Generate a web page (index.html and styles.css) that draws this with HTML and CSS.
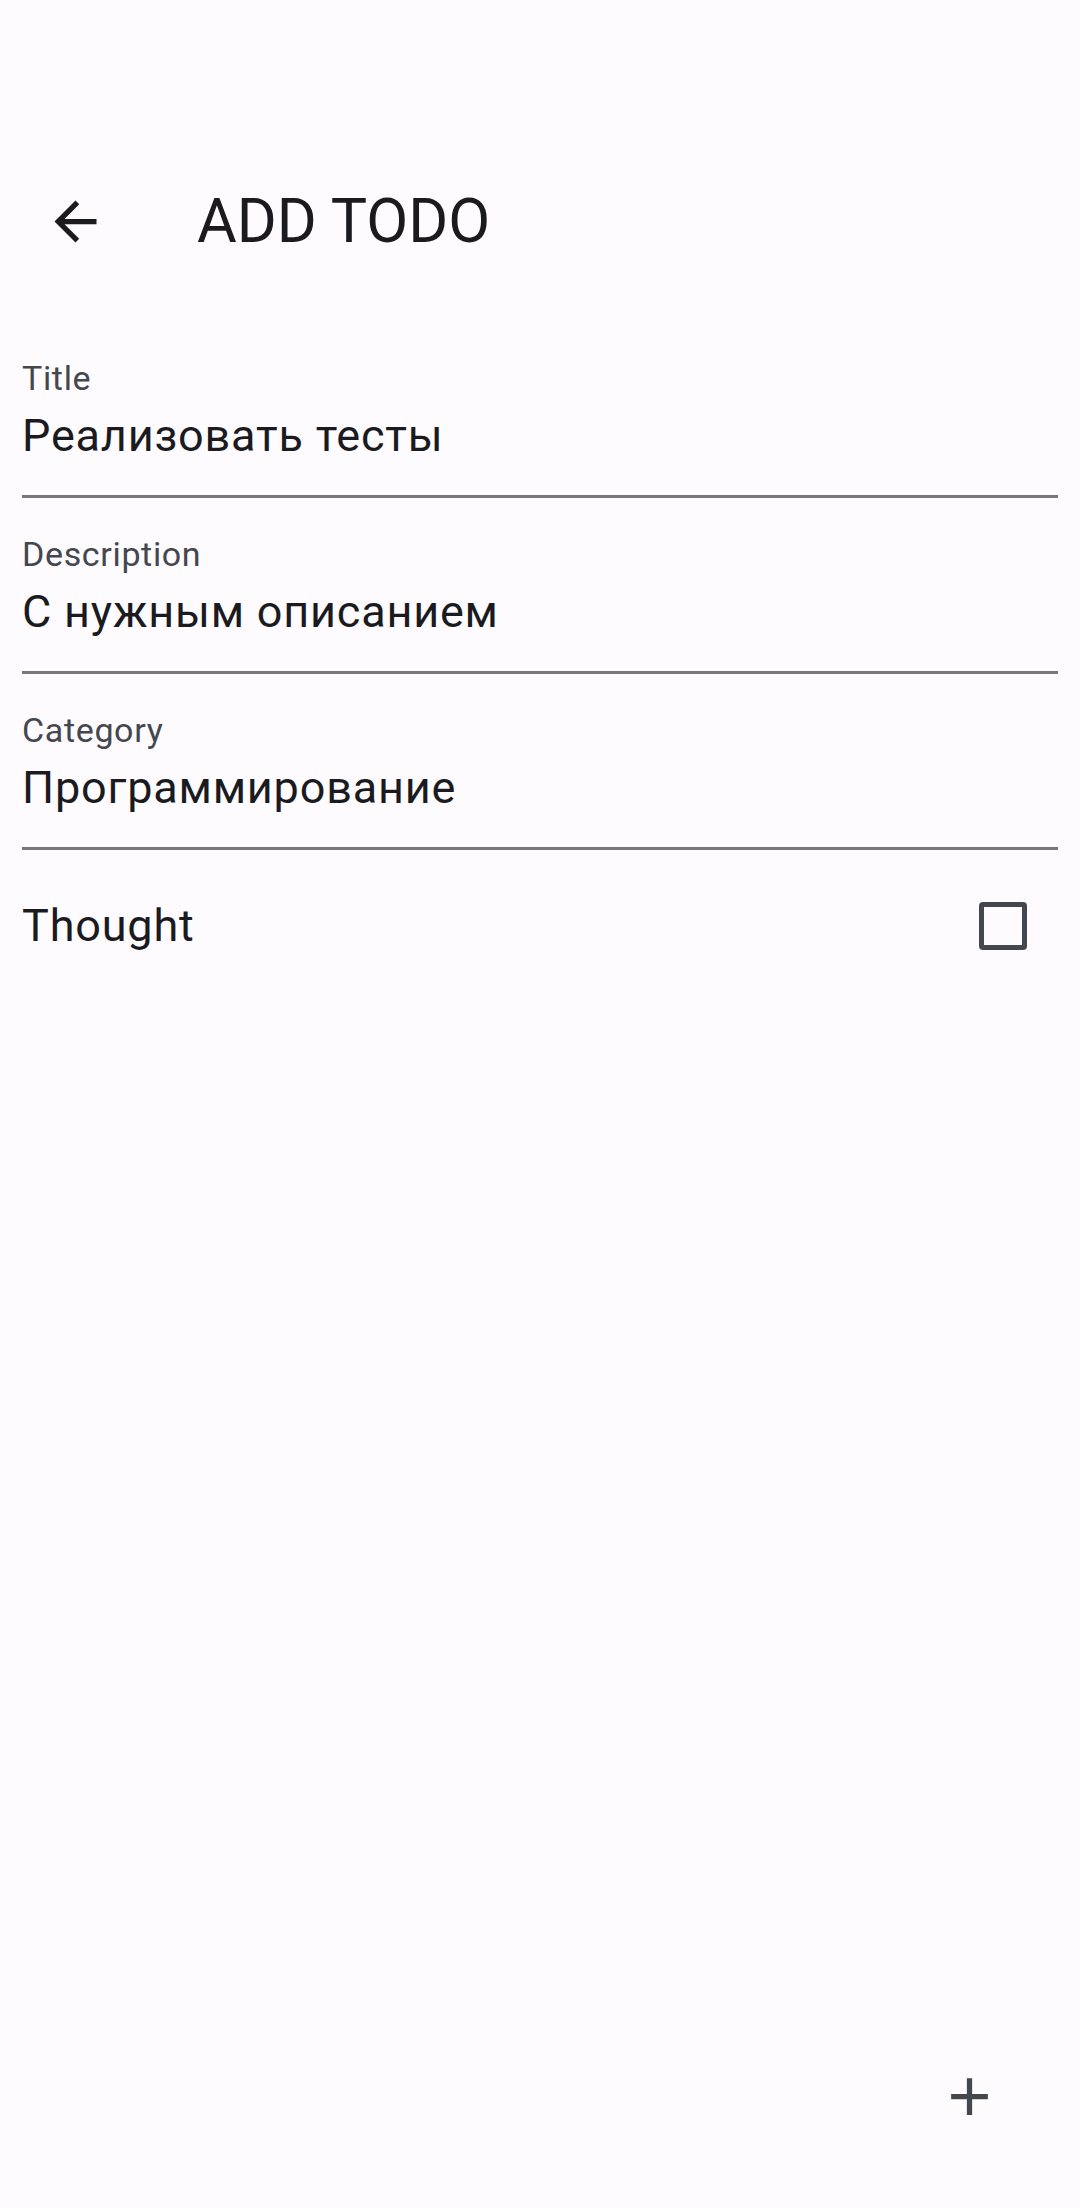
FILE: index.html
```html
<!DOCTYPE html>
<html lang="ru">
<head>
<meta charset="utf-8">
<title>Add todo</title>
<link rel="stylesheet" href="styles.css">
</head>
<body>
<div class="screen">
  <div class="status"></div>
  <header class="appbar">
    <div class="back">
      <svg viewBox="0 0 24 24" width="63" height="63"><path d="M20 11H7.83l5.59-5.59L12 4l-8 8 8 8 1.41-1.41L7.83 13H20v-2z" fill="#1b1b1f"/></svg>
    </div>
    <h1 class="title">ADD TODO</h1>
  </header>
  <main class="form">
    <div class="field">
      <div class="label">Title</div>
      <div class="value">Реализовать тесты</div>
    </div>
    <div class="field">
      <div class="label">Description</div>
      <div class="value">С нужным описанием</div>
    </div>
    <div class="field">
      <div class="label">Category</div>
      <div class="value">Программирование</div>
    </div>
    <div class="check-row">
      <span class="check-label">Thought</span>
      <span class="checkbox"></span>
    </div>
  </main>
  <div class="fab">
    <svg viewBox="0 0 24 24" width="63" height="63"><path d="M19 13h-6v6h-2v-6H5v-2h6V5h2v6h6v2z" fill="#44474e"/></svg>
  </div>
</div>
</body>
</html>
```
FILE: styles.css
```css
html, body {
  margin: 0;
  padding: 0;
  background: #fdfbfe;
}
body {
  font-family: Roboto, "Noto Sans", "Liberation Sans", sans-serif;
  color: #1b1b1f;
}
.screen {
  position: relative;
  width: 1080px;
  height: 2208px;
  overflow: hidden;
}
.status {
  height: 137px;
}
.appbar {
  height: 168px;
  display: flex;
  align-items: center;
}
.back {
  width: 147px;
  height: 147px;
  padding-left: 3px;
  box-sizing: border-box;
  display: flex;
  align-items: center;
  justify-content: center;
}
.back svg { display: block; }
.title {
  margin: 0 0 0 50px;
  font-size: 61px;
  font-weight: 400;
  line-height: 74px;
  letter-spacing: 0;
}
.form {
  padding: 17px 22px 0;
}
.field {
  padding-top: 36px;
  padding-bottom: 32px;
  border-bottom: 3px solid #77787e;
}
.label {
  font-size: 34px;
  line-height: 40px;
  letter-spacing: 0.65px;
  color: #44474e;
  margin-bottom: 11px;
}
.value {
  font-size: 45px;
  line-height: 54px;
  letter-spacing: 0.8px;
  color: #1b1b1f;
}
.check-row {
  margin-top: 49px;
  height: 54px;
  display: flex;
  align-items: center;
  justify-content: space-between;
}
.check-label {
  font-size: 45px;
  line-height: 54px;
  letter-spacing: 0.8px;
}
.checkbox {
  box-sizing: border-box;
  width: 48px;
  height: 48px;
  border: 5px solid #44474e;
  border-radius: 4px;
  margin-right: 31px;
}
.fab {
  position: absolute;
  right: 37px;
  bottom: 38px;
  width: 147px;
  height: 147px;
  display: flex;
  align-items: center;
  justify-content: center;
}
.fab svg { display: block; }
```
